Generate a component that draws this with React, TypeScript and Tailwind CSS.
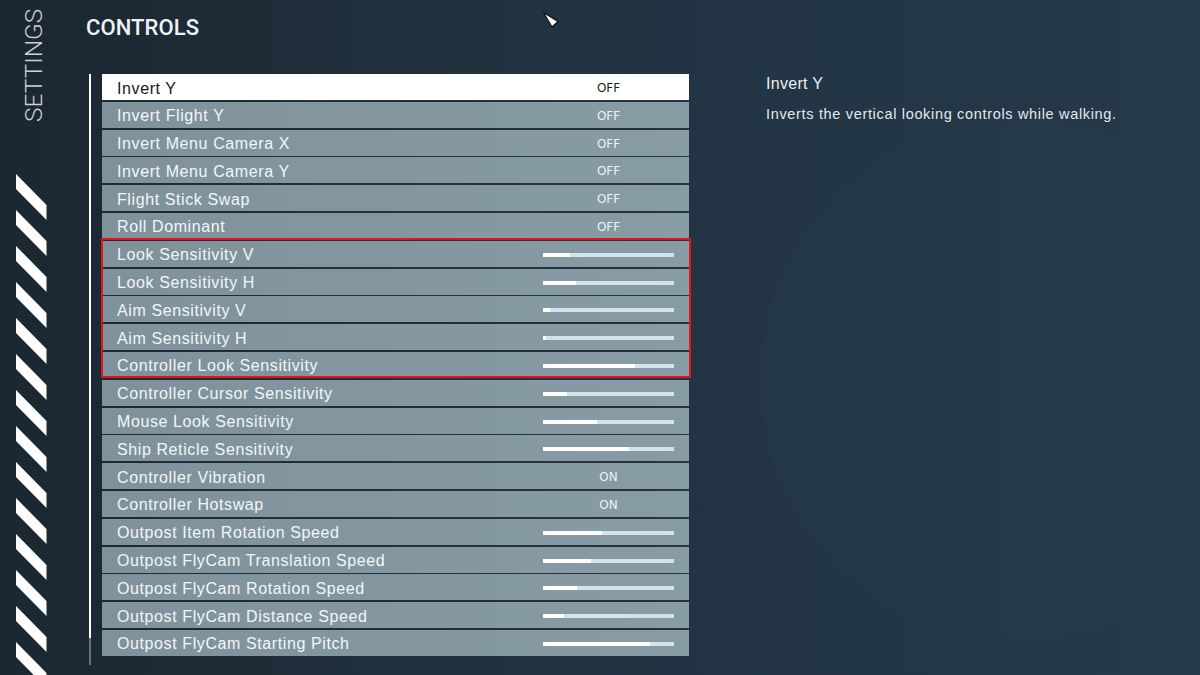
import React from "react";

type Row = { label: string; kind: "toggle" | "slider"; value: string | number };

const rows: Row[] = [
  { label: "Invert Y", kind: "toggle", value: "OFF" },
  { label: "Invert Flight Y", kind: "toggle", value: "OFF" },
  { label: "Invert Menu Camera X", kind: "toggle", value: "OFF" },
  { label: "Invert Menu Camera Y", kind: "toggle", value: "OFF" },
  { label: "Flight Stick Swap", kind: "toggle", value: "OFF" },
  { label: "Roll Dominant", kind: "toggle", value: "OFF" },
  { label: "Look Sensitivity V", kind: "slider", value: 0.206 },
  { label: "Look Sensitivity H", kind: "slider", value: 0.25 },
  { label: "Aim Sensitivity V", kind: "slider", value: 0.053 },
  { label: "Aim Sensitivity H", kind: "slider", value: 0.02 },
  { label: "Controller Look Sensitivity", kind: "slider", value: 0.7 },
  { label: "Controller Cursor Sensitivity", kind: "slider", value: 0.18 },
  { label: "Mouse Look Sensitivity", kind: "slider", value: 0.41 },
  { label: "Ship Reticle Sensitivity", kind: "slider", value: 0.66 },
  { label: "Controller Vibration", kind: "toggle", value: "ON" },
  { label: "Controller Hotswap", kind: "toggle", value: "ON" },
  { label: "Outpost Item Rotation Speed", kind: "slider", value: 0.45 },
  { label: "Outpost FlyCam Translation Speed", kind: "slider", value: 0.37 },
  { label: "Outpost FlyCam Rotation Speed", kind: "slider", value: 0.26 },
  { label: "Outpost FlyCam Distance Speed", kind: "slider", value: 0.16 },
  { label: "Outpost FlyCam Starting Pitch", kind: "slider", value: 0.82 },
];

function Stripes() {
  const items = Array.from({ length: 14 }, (_, i) => i * 36);
  return (
    <svg width="31" height="501" viewBox="0 0 31 501">
      {items.map((y) => (
        <polygon key={y} points={`0,${y} 30.5,${y + 31} 30.5,${y + 46} 0,${y + 15}`} fill="#ffffff" />
      ))}
    </svg>
  );
}

function SettingRow({ row, selected }: { row: Row; selected: boolean }) {
  return (
    <div
      className={`h-[26px] w-[587px] flex items-center justify-between ${
        selected ? "bg-white" : "bg-gradient-to-r from-[#7f929c] to-[#889ca6]"
      }`}
    >
      <span
        className={`pl-[15px] pt-[3px] text-[16px] leading-none tracking-[0.6px] ${
          selected ? "text-[#161a1d]" : "text-[#f3f6f7]"
        }`}
        style={{ fontFamily: '"Liberation Sans", Arial, sans-serif' }}
      >
        {row.label}
      </span>
      <div className="w-[131px] mr-[15px] pt-[2px] flex items-center justify-center">
        {row.kind === "toggle" ? (
          <span
            className={`text-[12px] leading-none ${selected ? "text-[#1c1f22]" : "text-[#eef3f5]"}`}
            style={{ fontFamily: '"DejaVu Sans", sans-serif' }}
          >
            {row.value}
          </span>
        ) : (
          <div className="w-[131px] h-[4px] bg-[#d2e3ec] flex">
            <div className="h-full bg-white" style={{ width: `${(row.value as number) * 100}%` }} />
          </div>
        )}
      </div>
    </div>
  );
}

export default function App() {
  return (
    <div
      className="relative w-[1200px] h-[675px] overflow-hidden flex bg-gradient-to-r from-[#1b2731] via-[#223442] to-[#25394a]"
      style={{ fontFamily: '"Liberation Sans", Arial, sans-serif' }}
    >
      {/* faint background watermark */}
      <div className="absolute left-[760px] top-[120px] w-[520px] h-[520px] rounded-full bg-[#2a4152] opacity-20" />

      {/* sidebar */}
      <div className="relative w-[86px] shrink-0 flex flex-col">
        <div className="h-[174px] pt-[10px] pl-[22px]">
          <div
            className="[writing-mode:vertical-rl] rotate-180 text-[24.5px] leading-none font-light text-[#c9d2d6] h-[112px] flex items-center"
            style={{ fontFamily: "Roboto, sans-serif" }}
          >
            SETTINGS
          </div>
        </div>
        <div className="pl-[16px]">
          <Stripes />
        </div>
      </div>

      {/* main */}
      <div className="relative flex flex-col">
        <div
          className="mt-[17px] text-[22px] leading-none font-medium text-[#eef2f4] tracking-[0.1px]"
          style={{ fontFamily: "Roboto, sans-serif" }}
        >
          CONTROLS
        </div>
        <div className="mt-[35px] flex items-start">
          <div className="ml-[3px] w-[2px] flex flex-col">
            <div className="h-[564px] bg-white" />
            <div className="h-[27px] bg-[#5f717b]" />
          </div>
          <div className="ml-[11px] relative flex flex-col gap-[1.8px]">
            {rows.map((r, i) => (
              <SettingRow key={r.label} row={r} selected={i === 0} />
            ))}
            <div className="absolute left-[-1px] right-[-2px] top-[164px] h-[140px] border-2 border-[#e5141c] pointer-events-none" />
          </div>
          <div className="ml-[77px] mt-[2px] flex flex-col">
            <div className="text-[16px] leading-none text-[#e9eef0] tracking-[0.3px]">Invert Y</div>
            <div className="mt-[14.5px] text-[14.5px] leading-none text-[#e3e9ec] tracking-[0.67px]">
              Inverts the vertical looking controls while walking.
            </div>
          </div>
        </div>
      </div>

      {/* mouse cursor */}
      <svg className="absolute left-[541px] top-[10px]" width="20" height="20" viewBox="0 0 20 20">
        <polygon points="2.5,2.5 17,11.5 11,17" fill="#ffffff" stroke="#111" strokeWidth="1.2" strokeLinejoin="round" />
      </svg>
    </div>
  );
}
